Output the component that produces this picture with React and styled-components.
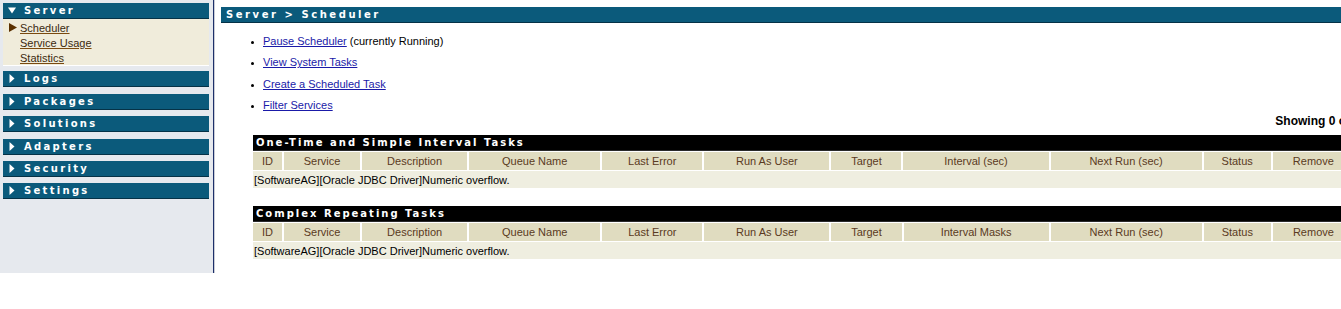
import styled, { createGlobalStyle } from 'styled-components';

const GlobalStyle = createGlobalStyle`
  html, body {
    margin: 0;
    padding: 0;
    background: #fff;
    overflow: hidden;
  }
  body {
    font-family: 'Liberation Sans', Arial, sans-serif;
    font-size: 11px;
  }
`;

const menu = ['Logs', 'Packages', 'Solutions', 'Adapters', 'Security', 'Settings'];
const subItems = ['Scheduler', 'Service Usage', 'Statistics'];

const columns = [
  { label: 'ID', w: 29 },
  { label: 'Service', w: 76 },
  { label: 'Description', w: 105 },
  { label: 'Queue Name', w: 131 },
  { label: 'Last Error', w: 100 },
  { label: 'Run As User', w: 125 },
  { label: 'Target', w: 70 },
  { label: 'Interval (sec)', w: 145 },
  { label: 'Next Run (sec)', w: 151 },
  { label: 'Status', w: 67 },
  { label: 'Remove', w: 81 },
];

const Caret = ({ open }) => (
  <svg width='8' height='9' viewBox='0 0 8 9'>
    {open ? <path d='M0 1.5 L8 1.5 L4 7.5 Z' fill='#fff' /> : <path d='M1.5 0 L6.5 4.5 L1.5 9 Z' fill='#fff' />}
  </svg>
);

const App = () => {
  return (
    <Page>
      <GlobalStyle />
      <Sidebar>
        <MenuBar>
          <Caret open />
          <span>Server</span>
        </MenuBar>
        <SubMenu>
          {subItems.map((s, i) => (
            <SubItem key={s}>
              <Marker $show={i === 0}>
                <svg width='8' height='9' viewBox='0 0 8 9'>
                  <path d='M0 0 L8 4.5 L0 9 Z' fill='#5a3000' />
                </svg>
              </Marker>
              <SubLink href='#'>{s}</SubLink>
            </SubItem>
          ))}
        </SubMenu>
        {menu.map((m) => (
          <MenuBar key={m} $spaced>
            <Caret />
            <span>{m}</span>
          </MenuBar>
        ))}
      </Sidebar>
      <Main>
        <TitleBar>Server &gt; Scheduler</TitleBar>
        <Actions>
          <li>
            <ActionLink href='#'>Pause Scheduler</ActionLink> (currently Running)
          </li>
          <li>
            <ActionLink href='#'>View System Tasks</ActionLink>
          </li>
          <li>
            <ActionLink href='#'>Create a Scheduled Task</ActionLink>
          </li>
          <li>
            <ActionLink href='#'>Filter Services</ActionLink>
          </li>
        </Actions>
        <Tables>
          <Showing>Showing 0 of 0</Showing>
          <TaskTable title='One-Time and Simple Interval Tasks' cols={columns} />
          <Spacer />
          <TaskTable
            title='Complex Repeating Tasks'
            cols={columns.map((c) => (c.label === 'Interval (sec)' ? { ...c, label: 'Interval Masks' } : c))}
          />
        </Tables>
      </Main>
    </Page>
  );
};

const TaskTable = ({ title, cols }) => (
  <Table>
    <colgroup>
      {cols.map((c) => (
        <col key={c.label} style={{ width: c.w }} />
      ))}
    </colgroup>
    <thead>
      <tr>
        <TableTitle colSpan={cols.length}>{title}</TableTitle>
      </tr>
      <tr>
        {cols.map((c) => (
          <HeadCell key={c.label}>{c.label}</HeadCell>
        ))}
      </tr>
    </thead>
    <tbody>
      <tr>
        <DataCell colSpan={cols.length}>[SoftwareAG][Oracle JDBC Driver]Numeric overflow.</DataCell>
      </tr>
    </tbody>
  </Table>
);

const Page = styled.div`
  display: flex;
  align-items: flex-start;
  width: 1420px;
`;

const Sidebar = styled.nav`
  box-sizing: border-box;
  width: 214px;
  height: 273px;
  padding: 3px 4px 0 3px;
  background: #e6e9ee;
  border-right: 1px solid #1d2f6a;
  box-shadow: 1px 0 0 #c9ccd6;
  flex-shrink: 0;
`;

const MenuBar = styled.div`
  height: 16px;
  box-sizing: border-box;
  background: #0b5a7b;
  border-bottom: 1px solid #053247;
  display: flex;
  align-items: center;
  gap: 8px;
  padding-left: 5px;
  margin-top: ${(p) => (p.$spaced ? '6.4px' : '0')};
  color: #fff;
  font-family: 'DejaVu Sans', Verdana, sans-serif;
  font-weight: bold;
  font-size: 10px;
  letter-spacing: 2.3px;
  svg {
    flex-shrink: 0;
  }
`;

const SubMenu = styled.div`
  background: #f0ecdb;
  border-bottom: 1px solid #fff;
  padding: 1px 0 0 6px;
  height: 47px;
  box-sizing: border-box;
  margin-bottom: -1px;
`;

const SubItem = styled.div`
  display: flex;
  align-items: center;
  height: 15.4px;
  gap: 3px;
`;

const Marker = styled.span`
  width: 8px;
  display: flex;
  visibility: ${(p) => (p.$show ? 'visible' : 'hidden')};
`;

const SubLink = styled.a`
  color: #3b2a10;
  text-decoration: underline;
  text-decoration-color: #7a4a10;
  font-size: 11px;
`;

const Main = styled.main`
  flex: 1;
  padding: 7px 0 0 7px;
`;

const TitleBar = styled.div`
  height: 16px;
  box-sizing: border-box;
  background: #0b5a7b;
  border-bottom: 1px solid #053247;
  color: #fff;
  font-family: 'DejaVu Sans', Verdana, sans-serif;
  font-weight: bold;
  font-size: 10px;
  letter-spacing: 2.55px;
  line-height: 15px;
  padding-left: 5px;
`;

const Actions = styled.ul`
  margin: 8px 0 0;
  padding-left: 42px;
  li {
    line-height: 21.3px;
    font-size: 11px;
    color: #000;
  }
  li::marker {
    font-size: 9px;
  }
`;

const ActionLink = styled.a`
  color: #1a1aa8;
  text-decoration: underline;
`;

const Tables = styled.div`
  margin-left: 30px;
  width: 1105px;
`;

const Showing = styled.div`
  text-align: right;
  font-weight: bold;
  font-size: 12px;
  line-height: 14px;
  margin: -2px -4px 7px 0;
`;

const Spacer = styled.div`
  height: 18px;
`;

const Table = styled.table`
  border-collapse: separate;
  border-spacing: 2px 1px;
  table-layout: fixed;
  width: 1105px;
  margin: -1px 0;
`;

const TableTitle = styled.th`
  background: #000;
  color: #fff;
  height: 16px;
  padding: 0 0 0 3px;
  text-align: left;
  font-family: 'DejaVu Sans', Verdana, sans-serif;
  font-weight: bold;
  font-size: 10px;
  letter-spacing: 2px;
  line-height: 15px;
  border-bottom: 1px solid #2a2a2a;
  box-sizing: border-box;
`;

const HeadCell = styled.th`
  background: #e0dcc0;
  color: #5a3a22;
  font-weight: normal;
  font-size: 11px;
  height: 18px;
  padding: 0;
  text-align: center;
  white-space: nowrap;
  overflow: hidden;
`;

const DataCell = styled.td`
  background: #efeee0;
  color: #000;
  font-size: 11px;
  height: 17px;
  padding: 0 0 0 1px;
`;

export default App;
